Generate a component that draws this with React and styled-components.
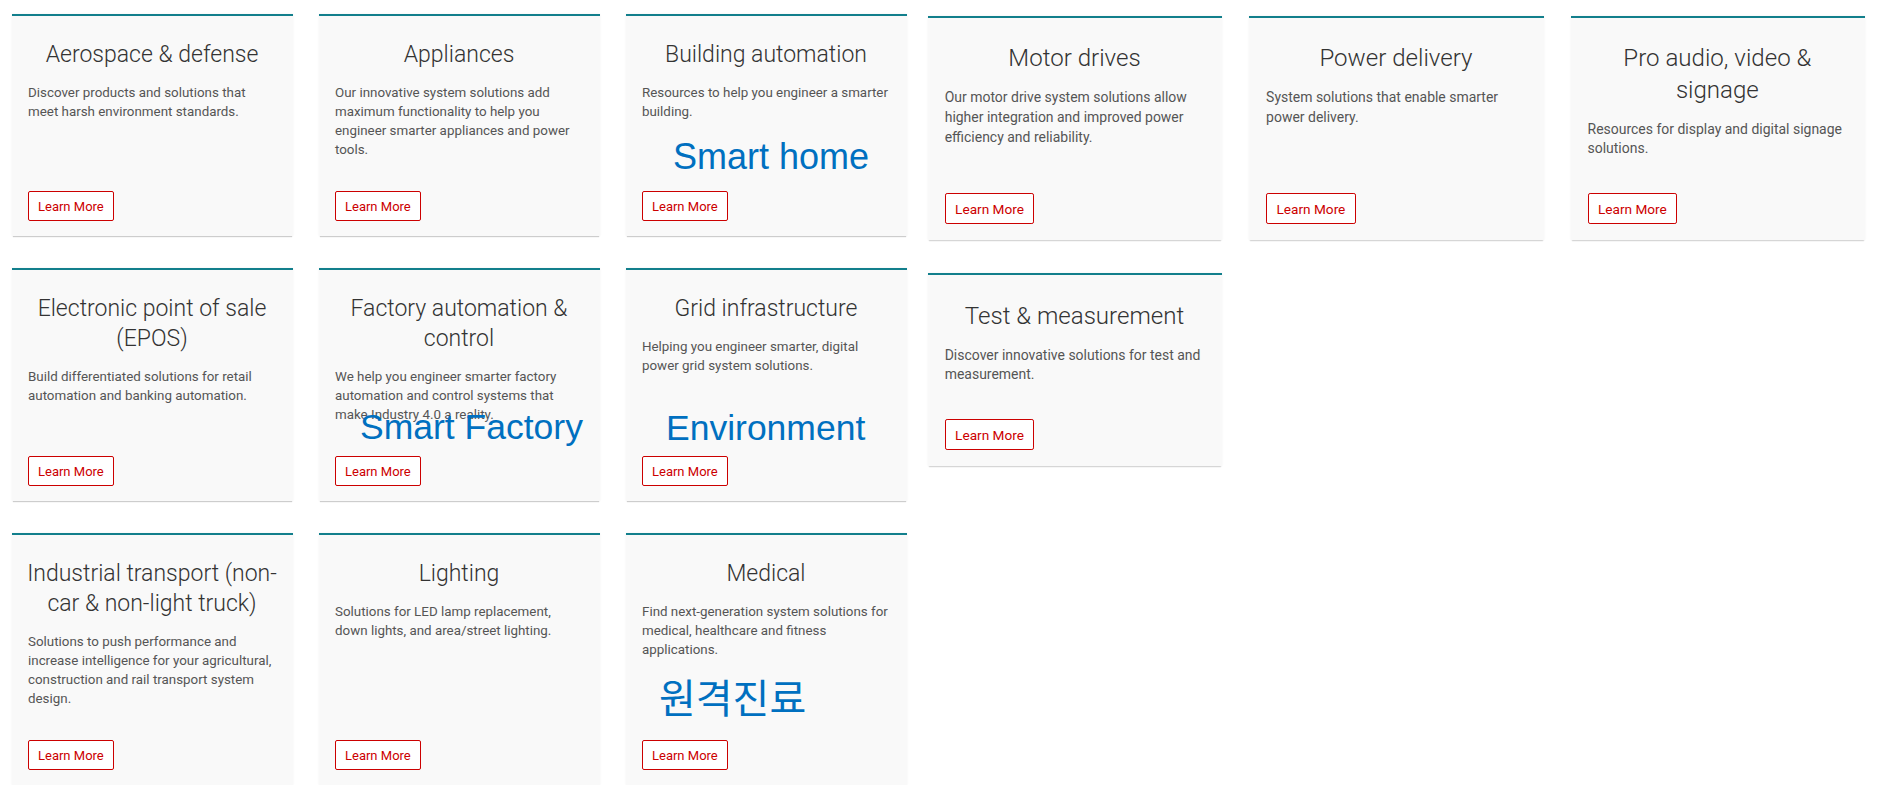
import React from 'react'
import styled, { createGlobalStyle } from 'styled-components'

const GlobalStyle = createGlobalStyle`
  body {
    margin: 0;
    background: #fff;
    font-family: Roboto, "Noto Sans", sans-serif;
  }
`

const Page = styled.div`
  display: flex;
  align-items: flex-start;
`

const CardGrid = styled.div`
  display: grid;
  grid-template-columns: repeat(3, 281px);
  column-gap: 26px;
  row-gap: 32px;
  margin: ${p => p.$top}px 0 0 ${p => p.$left}px;
  zoom: ${p => p.$zoom || 1};
`

const Card = styled.div`
  position: relative;
  display: flex;
  flex-direction: column;
  background: #f9f9f9;
  border-top: 2px solid #127f8c;
  padding: 24px 17px 15px 16px;
  box-shadow: 0 2px 1px -1px rgba(0, 0, 0, 0.18), 0 0 2px rgba(0, 0, 0, 0.06);
`

const Title = styled.h3`
  margin: 0 ${p => p.$inset}px 13px;
  font-weight: 300;
  font-size: 23px;
  line-height: 30px;
  color: #333;
  text-align: center;
`

const Desc = styled.p`
  margin: 0 0 32px;
  font-size: 13.36px;
  line-height: 19px;
  color: #555;
`

const LearnMore = styled.a`
  margin-top: auto;
  align-self: flex-start;
  box-sizing: border-box;
  height: 30px;
  padding: 0 9px;
  display: inline-flex;
  align-items: center;
  border: 1px solid #cc0000;
  border-radius: 2px;
  background: #fff;
  color: #cc0000;
  font-size: 13px;
  text-decoration: none;
`

// blue annotation written over some of the cards
const Tag = styled.span`
  position: absolute;
  left: ${p => p.$x}px;
  top: ${p => p.$y}px;
  font-family: "Liberation Sans", Arial, "Noto Sans CJK KR", sans-serif;
  font-size: ${p => p.$size || 35.5}px;
  line-height: 35px;
  color: #0070c0;
  white-space: nowrap;
`

const leftCards = [
  { title: 'Aerospace & defense', text: 'Discover products and solutions that meet harsh environment standards.' },
  { title: 'Appliances', text: 'Our innovative system solutions add maximum functionality to help you engineer smarter appliances and power tools.' },
  { title: 'Building automation', text: 'Resources to help you engineer a smarter building.', tag: { label: 'Smart home', x: 47, y: 123, size: 36 } },
  { title: 'Electronic point of sale (EPOS)', text: 'Build differentiated solutions for retail automation and banking automation.' },
  { title: 'Factory automation & control', text: 'We help you engineer smarter factory automation and control systems that make Industry 4.0 a reality.', tag: { label: 'Smart Factory', x: 41, y: 140 } },
  { title: 'Grid infrastructure', text: 'Helping you engineer smarter, digital power grid system solutions.', tag: { label: 'Environment', x: 40, y: 141 } },
  { title: 'Industrial transport (non-car & non-light truck)', text: 'Solutions to push performance and increase intelligence for your agricultural, construction and rail transport system design.' },
  { title: 'Lighting', text: 'Solutions for LED lamp replacement, down lights, and area/street lighting.' },
  { title: 'Medical', text: 'Find next-generation system solutions for medical, healthcare and fitness applications.', tag: { label: '원격진료', x: 33, y: 147, size: 40 } },
]

const rightCards = [
  { title: 'Motor drives', text: 'Our motor drive system solutions allow higher integration and improved power efficiency and reliability.' },
  { title: 'Power delivery', text: 'System solutions that enable smarter power delivery.' },
  { title: 'Pro audio, video & signage', text: 'Resources for display and digital signage solutions.' },
  { title: 'Test & measurement', text: 'Discover innovative solutions for test and measurement.' },
]

const SolutionCard = ({ title, text, tag, inset }) => <Card>
  <Title $inset={inset}>{title}</Title>
  <Desc>{text}</Desc>
  <LearnMore href="#">Learn More</LearnMore>
  {tag && <Tag $x={tag.x} $y={tag.y} $size={tag.size}>{tag.label}</Tag>}
</Card>

export default function App() {
  return <>
    <GlobalStyle/>
    <Page>
      <CardGrid $top={14} $left={12}>
        {leftCards.map(c => <SolutionCard key={c.title} inset={-4} {...c}/>)}
      </CardGrid>
      <CardGrid $top={15.3} $left={20} $zoom={1.047}>
        {rightCards.map(c => <SolutionCard key={c.title} inset={12} {...c}/>)}
      </CardGrid>
    </Page>
  </>
}
